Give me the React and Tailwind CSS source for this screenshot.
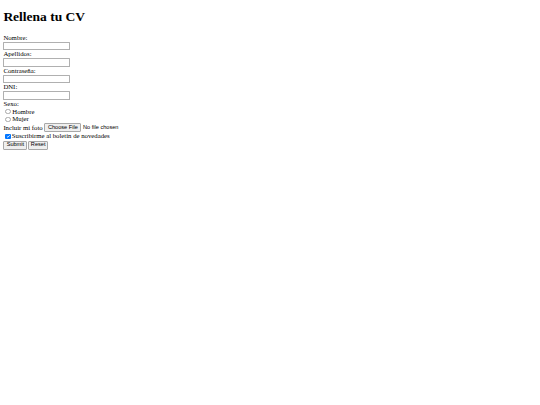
import React from "react";

const fields = ["Nombre", "Apellidos", "Contraseña", "DNI"];

function Radio({ label }) {
  return (
    <div className="h-[7.9px] flex items-center">
      <span className="ml-[2.1px] mr-[1.3px] w-[5.5px] h-[5.5px] rounded-full border-[0.6px] border-[#a8a8a8] bg-white inline-block" />
      <span>{label}</span>
    </div>
  );
}

export default function App() {
  return (
    <div className="min-h-[405px] bg-white px-[3.375px] pt-[9.05px] text-black font-['Liberation_Serif',serif] text-[6.75px] leading-[7.76px]">
      <h1 className="text-[13.5px] leading-[15.5px] font-bold mb-[9.05px]">Rellena tu CV</h1>
      <form onSubmit={(e) => e.preventDefault()}>
        {fields.map((f) => (
          <div key={f}>
            <div className="h-[7.76px]">{f}:</div>
            <div className="h-[8.8px] pt-[0.3px]">
              <input
                type={f === "Contraseña" ? "password" : "text"}
                className="block w-[67px] h-[8.4px] border-[0.7px] border-[#b0b0b0] bg-white rounded-[0.5px] outline-none"
              />
            </div>
          </div>
        ))}
        <div className="h-[7.76px]">Sexo:</div>
        <Radio label="Hombre" />
        <Radio label="Mujer" />
        <div className="h-[9px] flex items-center">
          <span>Incluir mi foto</span>
          <span className="ml-[1.7px] h-[8.8px] px-[2.5px] flex items-center border-[0.6px] border-[#a8a8a8] rounded-[1px] bg-[#efefef] font-['Liberation_Sans',sans-serif] text-[5.6px]">
            Choose File
          </span>
          <span className="ml-[1.7px] font-['Liberation_Sans',sans-serif] text-[5.6px]">No file chosen</span>
        </div>
        <div className="h-[8px] flex items-center">
          <span className="ml-[1.7px] mr-[1.3px] w-[5.5px] h-[5.5px] rounded-[1px] bg-[#0075ff] inline-flex items-center justify-center">
            <svg viewBox="0 0 10 10" className="w-[4.5px] h-[4.5px]">
              <path d="M2 5.2 L4.2 7.3 L8.2 2.8" fill="none" stroke="white" strokeWidth="1.8" />
            </svg>
          </span>
          <span>Suscribirme al boletín de novedades</span>
        </div>
        <div className="h-[10px] flex items-center gap-[0.8px]">
          <button type="submit" className="h-[8.8px] w-[24px] flex items-center justify-center border-[0.6px] border-[#a8a8a8] rounded-[1px] bg-[#efefef] font-['Liberation_Sans',sans-serif] text-[5.6px]">
            Submit
          </button>
          <button type="reset" className="h-[8.8px] w-[20px] flex items-center justify-center border-[0.6px] border-[#a8a8a8] rounded-[1px] bg-[#efefef] font-['Liberation_Sans',sans-serif] text-[5.6px]">
            Reset
          </button>
        </div>
      </form>
    </div>
  );
}
